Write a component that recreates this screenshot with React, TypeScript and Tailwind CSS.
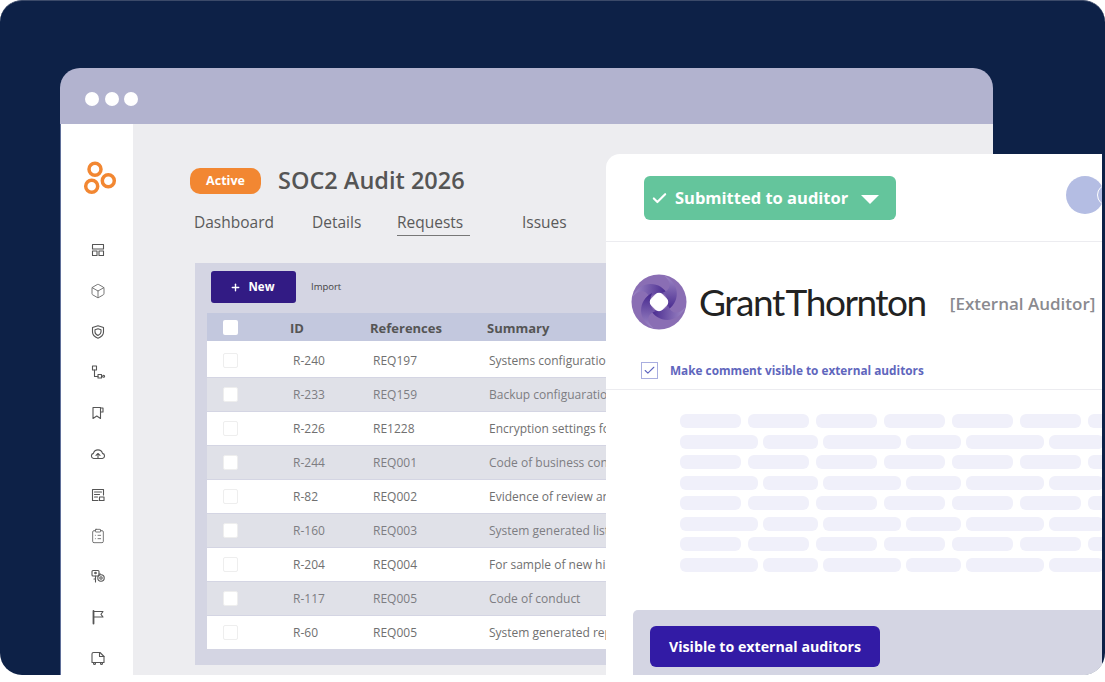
import { Box, Check, ClipboardList, Plus } from "lucide-react";
import type { ReactNode } from "react";

const rows = [
  ["R-240", "REQ197", "Systems configuration settings"],
  ["R-233", "REQ159", "Backup configuaration settings"],
  ["R-226", "RE1228", "Encryption settings for data"],
  ["R-244", "REQ001", "Code of business conduct"],
  ["R-82", "REQ002", "Evidence of review and approval"],
  ["R-160", "REQ003", "System generated list of users"],
  ["R-204", "REQ004", "For sample of new hires"],
  ["R-117", "REQ005", "Code of conduct"],
  ["R-60", "REQ005", "System generated report"],
];

const tabs = ["Dashboard", "Details", "Requests", "Issues"];

function Glyph({ children }: { children: ReactNode }) {
  return (
    <svg width="16" height="16" viewBox="0 0 16 16" fill="none" stroke="#555" strokeWidth="1.1" strokeLinejoin="round" strokeLinecap="round">
      {children}
    </svg>
  );
}

const navIcons = [
  <Glyph key="layout">
    <rect x="2.5" y="2.5" width="11" height="4.5" />
    <rect x="2.5" y="9" width="4.5" height="4.5" />
    <rect x="9" y="9" width="4.5" height="4.5" />
  </Glyph>,
  <Box key="box" size={16} stroke="#555" strokeWidth={1.2} />,
  <Glyph key="shield">
    <path d="M8 1.8 13.5 3.6V8c0 3-2.4 5-5.5 6.2C4.9 13 2.5 11 2.5 8V3.6z" />
    <path d="M8 4.8 11 5.8V8c0 1.6-1.3 2.7-3 3.5C6.3 10.7 5 9.6 5 8V5.8z" />
  </Glyph>,
  <Glyph key="flow">
    <rect x="2.5" y="2" width="4" height="4" />
    <path d="M4.5 6v6.5H8" />
    <rect x="8" y="10.5" width="3.5" height="3.5" />
    <circle cx="13.6" cy="12.3" r="1" />
  </Glyph>,
  <Glyph key="bookmark">
    <path d="M3 13.5V2.5h7.5v11L6.8 11z" />
    <path d="M10.5 3H13v4h-2.5" />
  </Glyph>,
  <Glyph key="cloud">
    <path d="M4.5 12.5H3.6A2.6 2.6 0 0 1 3.4 7.4 4.7 4.7 0 0 1 12.5 7.4 2.6 2.6 0 0 1 12.4 12.5H11.5" />
    <path d="M4.5 12.5h7M8 12V7.5M6 9.3 8 7.5l2 1.8" />
  </Glyph>,
  <Glyph key="list">
    <path d="M13.5 8V2.5h-11v11H8" />
    <path d="M4.5 5h7M4.5 7.5h5M4.5 10h3" />
    <rect x="9.5" y="10" width="4.5" height="3.5" />
  </Glyph>,
  <ClipboardList key="clip" size={16} stroke="#555" strokeWidth={1.2} />,
  <Glyph key="keys">
    <rect x="2" y="2.5" width="7" height="5.5" rx="1" />
    <path d="M5.5 8v6M5.5 11H4M9 6h1.5" />
    <circle cx="5.5" cy="5" r=".8" />
    <circle cx="11" cy="10" r="3.2" />
    <circle cx="11" cy="10" r="1.2" />
  </Glyph>,
  <Glyph key="flag">
    <path d="M3.5 14.5V2" strokeWidth="1.8" />
    <path d="M3.5 2.5H13l-2 2.8 2 2.7H3.5" />
  </Glyph>,
  <Glyph key="van">
    <path d="M2 12.5V4a1.5 1.5 0 0 1 1.5-1.5H10l4 4v6z" />
    <path d="M9.5 2.5v4H14" />
    <circle cx="4.5" cy="13.5" r="1" />
    <circle cx="11.5" cy="13.5" r="1" />
  </Glyph>,
];

function GrantThorntonMark() {
  const blade = "M9 -7 C2 -21 -19 -23 -27 -4 C-21 -13 -12 -13 -9 -3 C-8 -7 -1 -11 9 -7Z";
  return (
    <svg width="56" height="56" viewBox="-28 -28 56 56">
      <defs>
        <linearGradient id="gtBlade" gradientUnits="userSpaceOnUse" x1="-25" y1="-12" x2="8" y2="-10">
          <stop offset="0" stopColor="#9b84c3" />
          <stop offset="1" stopColor="#46288e" />
        </linearGradient>
      </defs>
      <circle r="27.5" fill="#8a6eb4" />
      {[0, 90, 180, 270].map((a) => (
        <path key={a} d={blade} fill="url(#gtBlade)" transform={`rotate(${a})`} />
      ))}
      <rect x="-8" y="-8" width="16" height="16" rx="5" fill="#fff" transform="rotate(45)" />
    </svg>
  );
}

function SkeletonRow({ long }: { long: boolean }) {
  const widths = long ? [78, 55, 78, 55, 78, 55] : [61, 61, 61, 61, 61, 61, 61];
  return (
    <div className={long ? "flex gap-[5px]" : "flex gap-[7px]"}>
      {widths.map((w, i) => (
        <div key={i} className="h-[14px] shrink-0 rounded-[6px] bg-[#f0f0fa]" style={{ width: w }} />
      ))}
    </div>
  );
}

export default function App() {
  return (
    <div className="h-[682px] w-[1105px] overflow-hidden bg-white font-['Open_Sans',sans-serif]">
      <div className="relative h-[675px] w-[1105px] overflow-hidden rounded-[22px] border-t border-[#3b4a69] bg-[#0d2147] pl-[60px] pt-[67px]">
        {/* browser window */}
        <div className="flex h-[620px] w-[933px] flex-col overflow-hidden rounded-t-[20px]">
          <div className="flex h-[56px] shrink-0 items-center gap-[5.6px] bg-[#b2b3cf] pl-[25px] pt-[6px]">
            <span className="h-[14px] w-[14px] rounded-full bg-white" />
            <span className="h-[14px] w-[14px] rounded-full bg-white" />
            <span className="h-[14px] w-[14px] rounded-full bg-white" />
          </div>
          <div className="flex min-h-0 flex-1 bg-[#5f6f99]">
            <aside className="ml-px flex w-[72px] shrink-0 flex-col items-center bg-white pt-[35px]">
              <svg width="34" height="36" viewBox="0 0 34 36" fill="none" stroke="#f28732" strokeWidth="3.5" className="ml-[5px]">
                <circle cx="12" cy="10.3" r="6" />
                <circle cx="8.7" cy="27.3" r="6" />
                <circle cx="25.3" cy="21.7" r="6" />
              </svg>
              <div className="ml-[2px] mt-[47px] flex flex-col items-center gap-[24.8px]">{navIcons}</div>
            </aside>

            <main className="min-w-0 flex-1 bg-[#ededf0] pl-[57px] pt-[44px]">
              <div className="flex items-center">
                <span className="flex h-[26px] w-[71px] items-center justify-center rounded-[10px] bg-[#f28732] text-[12.5px] font-bold text-white">Active</span>
                <h1 className="mb-[2px] ml-[17px] text-[23.5px] leading-[24px] font-semibold text-[#555]">SOC2 Audit 2026</h1>
              </div>
              <nav className="ml-[4px] mt-[16px] flex text-[15.5px] leading-[24px] text-[#5a5a5a]">
                {tabs.map((t) => (
                  <span
                    key={t}
                    className={
                      t === "Dashboard"
                        ? "w-[118px]"
                        : t === "Details"
                          ? "w-[85px]"
                          : t === "Requests"
                            ? "mr-[52px] w-[73px] border-b border-[#777] pb-[1px]"
                            : ""
                    }
                  >
                    {t}
                  </span>
                ))}
              </nav>

              <section className="ml-[5px] mt-[27px] w-[760px] bg-[#d4d5e3] px-[12px] pb-[15px] pt-[8px]">
                <div className="flex h-[32px] items-center">
                  <button className="ml-[4px] flex h-[32px] w-[85px] items-center justify-center gap-[8px] rounded-[3px] bg-[#321b84] pr-[3px] text-[11.5px] font-bold text-white">
                    <Plus size={11} strokeWidth={3} />
                    New
                  </button>
                  <span className="ml-[15px] text-[9.5px] text-[#444]">Import</span>
                </div>
                <div className="mt-[10px] flex h-[28px] items-center bg-[#c3c8de] text-[13px] font-bold text-[#555]">
                  <span className="ml-[16px] h-[15px] w-[15px] rounded-[2px] bg-white" />
                  <span className="ml-[52px] w-[80px] pt-[3px]">ID</span>
                  <span className="w-[117px] pt-[3px]">References</span>
                  <span className="pt-[3px]">Summary</span>
                </div>
                {rows.map((r, i) => (
                  <div
                    key={r[0]}
                    className={
                      (i === 0 ? "h-[37px] pt-[3px] " : "h-[34px] ") +
                      (i % 2 === 0
                        ? "flex items-center border-b border-[#d4d5e3] bg-white text-[12px] text-[#707070]"
                        : "flex items-center border-b border-[#d4d5e3] bg-[#e0e1e8] text-[12px] text-[#7d7d82]")
                    }
                  >
                    <span className="ml-[16px] h-[15px] w-[15px] rounded-[2px] border border-[#eee] bg-white" />
                    <span className="ml-[55px] w-[80px]">{r[0]}</span>
                    <span className="w-[116px]">{r[1]}</span>
                    <span className="whitespace-nowrap">{r[2]}</span>
                  </div>
                ))}
              </section>
            </main>
          </div>
        </div>

        {/* auditor panel over the window */}
        <div className="absolute left-[606px] top-[153px] h-[530px] w-[496px] overflow-hidden rounded-tl-[14px] bg-white">
          <div className="relative h-[88px] border-b border-[#ececf0] pl-[38px] pt-[22px]">
            <div className="flex h-[44px] w-[252px] items-center rounded-[6px] bg-[#64c59c] pl-[7px] text-[16.5px] font-bold text-white">
              <Check size={17} strokeWidth={3} />
              <span className="ml-[7px]">Submitted to auditor</span>
              <span className="ml-[13px] mt-[3px] h-0 w-0 border-x-[9px] border-t-[9px] border-x-transparent border-t-white" />
            </div>
            <span className="absolute left-[460px] top-[22px] h-[38px] w-[38px] overflow-hidden rounded-full bg-[#b4bde3]">
              <span className="absolute left-[31px] top-[8px] block h-[22px] w-[22px] rounded-full border border-white" />
            </span>
          </div>

          <div className="flex items-center pl-[25px] pt-[32px]">
            <GrantThorntonMark />
            <span className="ml-[12px] font-['Lato',sans-serif] text-[37px] leading-[44px] tracking-[-1.45px] text-[#222] [word-spacing:-5px]">Grant Thornton</span>
            <span className="ml-[24px] mt-[3px] whitespace-nowrap text-[17px] font-semibold text-[#8a8a8f]">[External Auditor]</span>
          </div>

          <div className="mt-[32px] flex h-[28px] items-start border-b border-[#ececf0] pl-[35px]">
            <span className="flex h-[17px] w-[17px] items-center justify-center border border-[#a9aee0] text-[#5f66c0]">
              <Check size={13} strokeWidth={2} />
            </span>
            <span className="ml-[12px] text-[11.8px] leading-[17px] font-bold text-[#6066bd]">Make comment visible to external auditors</span>
          </div>

          <div className="ml-[74px] mt-[24px] flex w-[422px] flex-col gap-[6.5px] overflow-hidden">
            {[0, 1, 2, 3, 4, 5, 6, 7].map((n) => (
              <SkeletonRow key={n} long={n % 2 === 1} />
            ))}
          </div>

          <div className="ml-[27px] mt-[38px] h-[70px] rounded-tl-[5px] bg-[#d4d5e3] pl-[17px] pt-[16px]">
            <button className="flex h-[41px] w-[230px] items-center justify-center rounded-[6px] bg-[#321ba5] pt-[1px] text-[14.2px] font-bold text-white">Visible to external auditors</button>
          </div>
        </div>
      </div>
    </div>
  );
}
